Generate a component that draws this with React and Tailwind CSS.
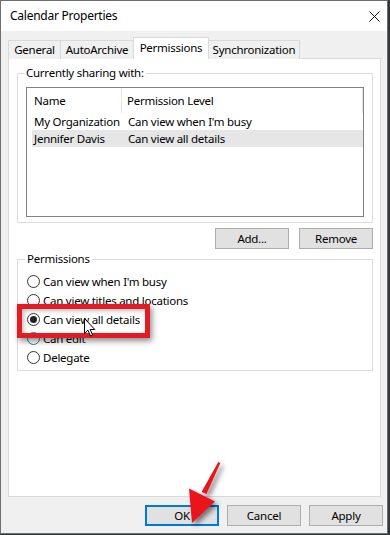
import React from "react";

function Radio({ label, checked, hover }) {
  return (
    <div className="flex items-center h-[19px]">
      <div
        className={
          "w-[13px] h-[13px] rounded-full border bg-white flex items-center justify-center " +
          (hover ? "border-[#1f74c2]" : "border-[#333333]")
        }
      >
        {checked && <div className="w-[7px] h-[7px] rounded-full bg-[#222222]" />}
      </div>
      <span className="ml-[3px] leading-[14px]">{label}</span>
    </div>
  );
}

export default function App() {
  return (
    <div className="w-[390px] h-[535px] bg-[#2e3a3a] font-['Noto_Sans',sans-serif] text-[11.5px] tracking-[-0.25px] text-black overflow-hidden">
      <div className="relative w-[388px] h-[534px] border border-[#6e6e6e] bg-[#f0f0f0] flex flex-col">
        {/* Title bar */}
        <div className="h-[30px] bg-white flex items-center justify-between pl-[9px] pr-[7px]">
          <span className="text-[12px]">Calendar Properties</span>
          <svg width="11" height="11" viewBox="0 0 11 11">
            <path d="M0.5 0.5 L10.5 10.5 M10.5 0.5 L0.5 10.5" stroke="#111" strokeWidth="1" />
          </svg>
        </div>

        <div className="pl-[7px] pt-[6px]">
          {/* Tabs */}
          <div className="flex items-end h-[22px]">
            <div className="w-[53px] h-[19px] border border-b-0 border-[#d9d9d9] bg-[#f0f0f0] flex items-center justify-center leading-[14px]">
              General
            </div>
            <div className="-ml-px w-[74px] h-[19px] border border-b-0 border-[#d9d9d9] bg-[#f0f0f0] flex items-center justify-center leading-[14px]">
              AutoArchive
            </div>
            <div className="relative z-10 -ml-px w-[76px] h-[22px] border border-b-0 border-[#d9d9d9] bg-white flex items-center justify-center leading-[14px] pb-[2px]">
              Permissions
            </div>
            <div className="-ml-px w-[92px] h-[19px] border border-b-0 border-[#d9d9d9] bg-[#f0f0f0] flex items-center justify-center leading-[14px]">
              Synchronization
            </div>
          </div>

          {/* Panel */}
          <div className="-mt-px w-[373px] h-[439px] border border-[#d9d9d9] bg-white px-[8px] pt-[7px]">
            <fieldset className="w-[356px] border border-[#dcdcdc] px-[8px] pt-[7px] pb-[5px]">
              <legend className="leading-[14px] px-[2px] -ml-[2px]">Currently sharing with:</legend>
              <div className="w-[338px] h-[130px] border border-[#828282] bg-white">
                <div className="flex h-[25px] items-center">
                  <div className="w-[95px] h-full border-r border-[#e5e5e5] flex items-center pl-[7px]">
                    Name
                  </div>
                  <div className="flex-1 h-full border-r border-[#e5e5e5] flex items-center pl-[5px]">
                    Permission Level
                  </div>
                </div>
                <div className="ml-[5px] mr-[0px] flex h-[17px] items-center">
                  <div className="w-[94px] pl-[2px] whitespace-nowrap">My Organization</div>
                  <div className="pl-[2px] whitespace-nowrap">Can view when I'm busy</div>
                </div>
                <div className="ml-[5px] mr-[0px] flex h-[17px] items-center bg-[#e6e6e6]">
                  <div className="w-[94px] pl-[2px] whitespace-nowrap">Jennifer Davis</div>
                  <div className="pl-[2px] whitespace-nowrap">Can view all details</div>
                </div>
              </div>
            </fieldset>

            <div className="w-[356px] flex justify-end gap-[10px] mt-[5px]">
              <button className="w-[74px] h-[21px] border border-[#adadad] bg-[#e1e1e1] flex items-center justify-center leading-[14px]">
                Add...
              </button>
              <button className="w-[74px] h-[21px] border border-[#adadad] bg-[#e1e1e1] flex items-center justify-center leading-[14px]">
                Remove
              </button>
            </div>

            <fieldset className="mt-[3px] w-[356px] border border-[#dcdcdc] pl-[9px] pt-[6px] pb-[3px]">
              <legend className="leading-[14px] px-[2px] -ml-[2px]">Permissions</legend>
              <Radio label="Can view when I'm busy" />
              <Radio label="Can view titles and locations" />
              <Radio label="Can view all details" checked />
              <Radio label="Can edit" hover />
              <Radio label="Delegate" />
            </fieldset>
          </div>
        </div>

        {/* Bottom buttons */}
        <div className="flex justify-end gap-[8px] pr-[4px] mt-[8px]">
          <button className="w-[74px] h-[21px] border-2 border-[#0078d7] bg-[#e1e1e1] flex items-center justify-center leading-[14px]">
            OK
          </button>
          <button className="w-[74px] h-[21px] border border-[#adadad] bg-[#e1e1e1] flex items-center justify-center leading-[14px]">
            Cancel
          </button>
          <button className="w-[74px] h-[21px] border border-[#adadad] bg-[#e1e1e1] flex items-center justify-center leading-[14px]">
            Apply
          </button>
        </div>

        {/* Red highlight box */}
        <div className="absolute left-[16px] top-[303px] w-[133px] h-[34px] border-[5px] border-[#e41b23] shadow-[2px_3px_6px_rgba(0,0,0,0.45),inset_2px_2px_4px_rgba(0,0,0,0.25)] pointer-events-none" />

        {/* Mouse cursor */}
        <svg
          className="absolute left-[83px] top-[317px] pointer-events-none"
          width="13"
          height="20"
          viewBox="0 0 13 20"
        >
          <path
            d="M0.5 0.5 L0.5 15.5 L4 12.2 L6.5 18 L8.6 17.1 L6.2 11.5 L10.8 11.5 Z"
            fill="#fff"
            stroke="#000"
            strokeWidth="1"
            strokeLinejoin="miter"
          />
        </svg>

        {/* Red arrow */}
        <svg
          className="absolute -left-px -top-px pointer-events-none"
          width="390"
          height="535"
          viewBox="0 0 390 535"
        >
          <defs>
            <filter id="sh" x="-50%" y="-50%" width="200%" height="200%">
              <feDropShadow dx="3" dy="3" stdDeviation="2.5" floodColor="#000" floodOpacity="0.5" />
            </filter>
          </defs>
          <g filter="url(#sh)" fill="#e8141c">
            <polygon points="218.3,462 220.3,463 206.5,494 201.5,492" />
            <polygon points="189,488.5 215,501.5 192,523" />
          </g>
        </svg>
      </div>
    </div>
  );
}
